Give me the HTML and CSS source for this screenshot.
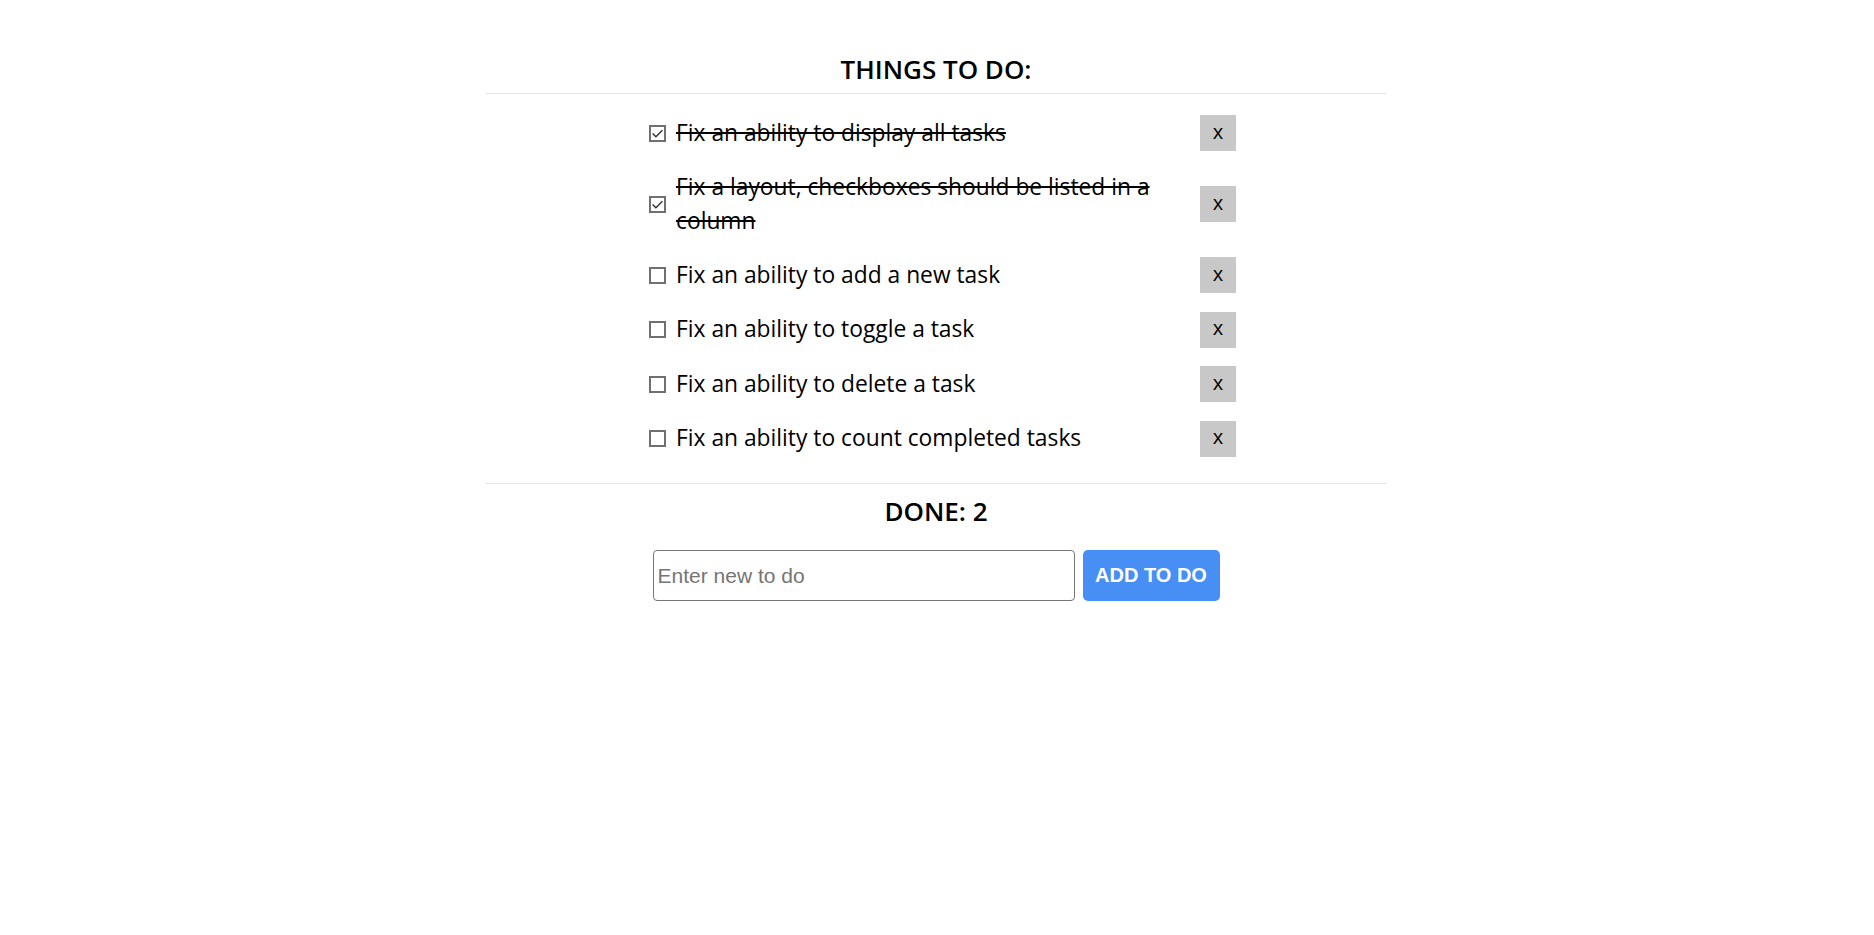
FILE: index.html
```html
<!DOCTYPE html>
<html lang="en">
<head>
<meta charset="utf-8">
<title>Things to do</title>
<link rel="stylesheet" href="styles.css">
</head>
<body>
<div class="app">
  <h2 class="title">THINGS TO DO:</h2>
  <ul class="list">
    <li class="row done">
      <span class="check"><svg viewBox="0 0 13 13" width="13" height="13"><path d="M1.6 6.4 L4.9 9.7 L11.4 3.2" fill="none" stroke="#333" stroke-width="1.4"/></svg></span>
      <span class="text">Fix an ability to display all tasks</span>
      <button class="del">x</button>
    </li>
    <li class="row done">
      <span class="check"><svg viewBox="0 0 13 13" width="13" height="13"><path d="M1.6 6.4 L4.9 9.7 L11.4 3.2" fill="none" stroke="#333" stroke-width="1.4"/></svg></span>
      <span class="text">Fix a layout, checkboxes should be listed in a column</span>
      <button class="del">x</button>
    </li>
    <li class="row">
      <span class="check"></span>
      <span class="text">Fix an ability to add a new task</span>
      <button class="del">x</button>
    </li>
    <li class="row">
      <span class="check"></span>
      <span class="text">Fix an ability to toggle a task</span>
      <button class="del">x</button>
    </li>
    <li class="row">
      <span class="check"></span>
      <span class="text">Fix an ability to delete a task</span>
      <button class="del">x</button>
    </li>
    <li class="row">
      <span class="check"></span>
      <span class="text">Fix an ability to count completed tasks</span>
      <button class="del">x</button>
    </li>
  </ul>
  <h2 class="done-count">DONE: 2</h2>
  <form class="add">
    <input class="new" type="text" placeholder="Enter new to do">
    <button class="add-btn" type="button">ADD TO DO</button>
  </form>
</div>
</body>
</html>
```

FILE: styles.css
```css
* { box-sizing: border-box; }
html, body { margin: 0; padding: 0; background: #fff; }
body {
  font-family: "Open Sans", "Noto Sans", sans-serif;
  color: #000;
}
.app {
  width: 902px;
  padding-right: 2px;
  margin: 0 auto;
}
.title {
  margin: 0;
  padding-top: 51px;
  height: 94px;
  font-size: 26px;
  font-weight: 600;
  line-height: 36px;
  text-align: center;
  border-bottom: 1px solid #e5e5e5;
}
.list {
  list-style: none;
  margin: 0;
  width: 900px;
  padding: 21px 150px 26.5px 163px;
  display: flex;
  flex-direction: column;
  gap: 18.5px;
  border-bottom: 1px solid #e5e5e5;
}
.row {
  display: flex;
  align-items: center;
  min-height: 36px;
}
.check {
  flex: none;
  width: 17px;
  height: 17px;
  border: 2px solid #707070;
  display: flex;
  align-items: center;
  justify-content: center;
  margin-right: 10px;
}
.check svg { width: 13px; height: 13px; display: block; }
.text {
  flex: 1;
  font-size: 22.8px;
  line-height: 34.5px;
  padding-right: 30px;
}
.done .text { text-decoration: line-through; text-decoration-thickness: 2px; }
.del {
  flex: none;
  width: 36px;
  height: 36px;
  border: none;
  background: #c8c8c8;
  font-family: "Open Sans", sans-serif;
  font-size: 20px;
  line-height: 1;
  padding: 0 0 3px;
  color: #000;
}
.done-count {
  margin: 0;
  padding-top: 9px;
  font-size: 26px;
  font-weight: 600;
  line-height: 36px;
  text-align: center;
}
.add {
  margin: 21px 0 0;
  display: flex;
  justify-content: center;
  gap: 8px;
}
.new {
  width: 422px;
  height: 51px;
  border: 1px solid #767676;
  border-radius: 4px;
  padding: 0 4px;
  font-family: "Liberation Sans", Arial, sans-serif;
  font-size: 21px;
  color: #000;
}
.new::placeholder { color: #757575; }
.add-btn {
  width: 137px;
  height: 51px;
  border: none;
  border-radius: 5px;
  background: #478ef5;
  color: #fff;
  font-family: "Liberation Sans", Arial, sans-serif;
  font-weight: bold;
  font-size: 20px;
  padding: 0;
}
```
